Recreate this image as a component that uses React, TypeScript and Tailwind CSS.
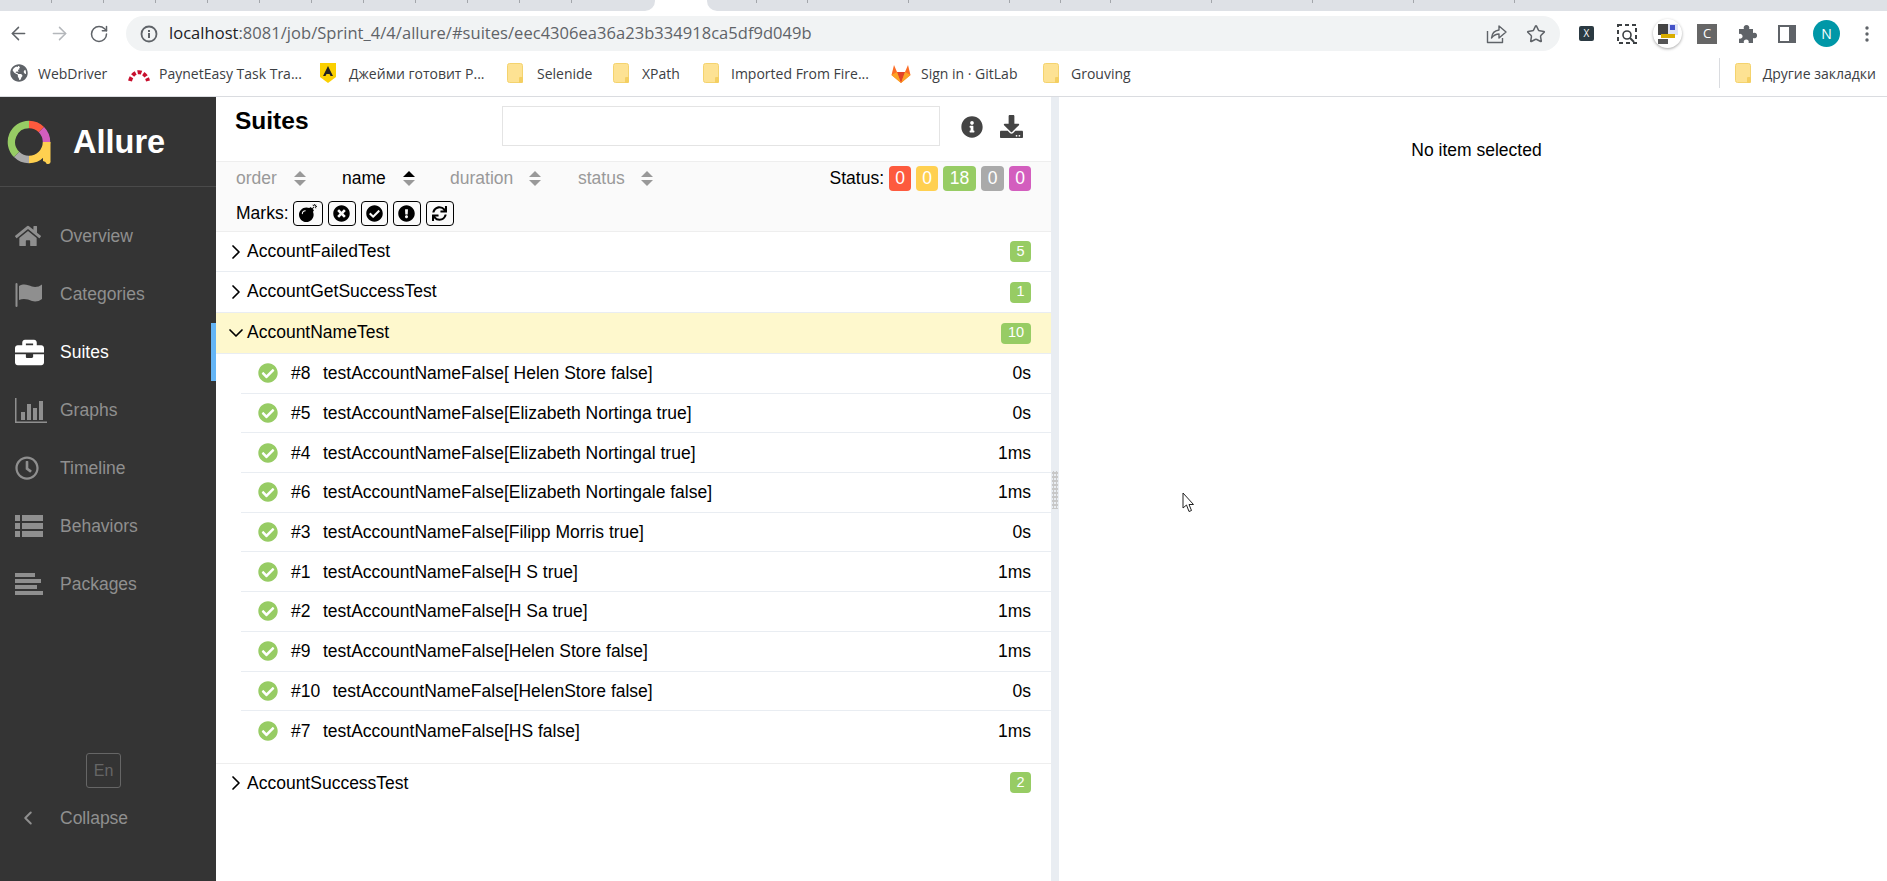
import React from "react";
import { ArrowLeft, ArrowRight, RotateCw, Star, ChevronRight, ChevronDown, ChevronLeft } from "lucide-react";
import { FaHome, FaBriefcase, FaRegClock, FaBomb, FaTimesCircle, FaCheckCircle, FaExclamationCircle, FaSync, FaInfoCircle, FaDownload, FaGlobeAmericas } from "react-icons/fa";

const Folder = () => (
  <svg width="16" height="20" viewBox="0 0 16 20" className="shrink-0">
    <rect x="0.5" y="0.5" width="15" height="19" rx="2" fill="#fde293" stroke="#f4d36e" />
    <rect x="12" y="14" width="4" height="6" rx="1" fill="#f4cf62" />
  </svg>
);

const Logo = () => (
  <svg width="44" height="44" viewBox="0 0 44 44" className="shrink-0">
    <g fill="none" strokeWidth="7.5">
      <path d="M22 4.5 A17.5 17.5 0 0 1 34.4 9.6" stroke="#fd5a3e" />
      <path d="M34.4 9.6 A17.5 17.5 0 0 1 39.5 22" stroke="#d35ebe" />
      <path d="M39.5 22 A17.5 17.5 0 0 1 22 39.5" stroke="#ffd050" />
      <path d="M22 39.5 A17.5 17.5 0 0 1 9.6 34.4" stroke="#aaaaaa" />
      <path d="M9.6 34.4 A17.5 17.5 0 0 1 22 4.5" stroke="#97cc64" />
    </g>
    <path d="M36 22 h7.5 v19 a2.5 2.5 0 0 1 -5 1 l-2.500 -1 z" fill="#ffd050" />
  </svg>
);

const Flag = () => (
  <svg width="28" height="25" viewBox="0 0 28 25" fill="#8f8f8f">
    <rect x="0.500" y="1" width="2" height="24" rx="1" />
    <path d="M4 4 C9 1 13 3 17 4.500 C20 5.500 24 5 27 2.500 V17 C24 19.500 20 20 17 19 C13 17.500 9 16 4 18 Z" />
  </svg>
);
const Chart = () => (
  <svg width="33" height="25" viewBox="0 0 33 25" fill="#8f8f8f">
    <rect x="0" y="0" width="1.500" height="25" />
    <rect x="0" y="23.500" width="32" height="1.500" />
    <rect x="6" y="14" width="4" height="8" />
    <rect x="12" y="6" width="4" height="16" />
    <rect x="18" y="10" width="4" height="12" />
    <rect x="24" y="3" width="4" height="19" />
  </svg>
);
const ListI = () => (
  <svg width="28" height="22" viewBox="0 0 28 22" fill="#8f8f8f">
    {[0, 8, 16].map((y) => (
      <g key={y}>
        <rect x="0" y={y} width="5" height="6" />
        <rect x="7" y={y} width="21" height="6" />
      </g>
    ))}
  </svg>
);
const Pack = () => (
  <svg width="28" height="22" viewBox="0 0 28 22" fill="#8f8f8f">
    <rect x="0" y="0" width="20" height="4" />
    <rect x="0" y="6" width="26" height="4" />
    <rect x="0" y="12" width="22" height="4" />
    <rect x="0" y="18" width="28" height="4" />
  </svg>
);

const Sort = ({ active }: { active?: boolean }) => (
  <svg width="12" height="15" viewBox="0 0 12 15" className="shrink-0">
    <path d="M6 0 L12 6 H0 Z" fill={active ? "#000000" : "#999999"} />
    <path d="M6 15 L12 9 H0 Z" fill="#999999" />
  </svg>
);

const Chev = () => <ChevronRight size={24} strokeWidth={1.700} className="-ml-[4px] -mr-[1px] shrink-0" />;

const nav = [
  { label: "Overview", icon: <FaHome size={26} color="#8f8f8f" /> },
  { label: "Categories", icon: <Flag /> },
  { label: "Suites", icon: <FaBriefcase size={29} color="#ffffff" />, active: true },
  { label: "Graphs", icon: <Chart /> },
  { label: "Timeline", icon: <FaRegClock size={24} color="#8f8f8f" /> },
  { label: "Behaviors", icon: <ListI /> },
  { label: "Packages", icon: <Pack /> },
];

const tests = [
  ["#8", "testAccountNameFalse[ Helen Store false]", "0s"],
  ["#5", "testAccountNameFalse[Elizabeth Nortinga true]", "0s"],
  ["#4", "testAccountNameFalse[Elizabeth Nortingal true]", "1ms"],
  ["#6", "testAccountNameFalse[Elizabeth Nortingale false]", "1ms"],
  ["#3", "testAccountNameFalse[Filipp Morris true]", "0s"],
  ["#1", "testAccountNameFalse[H S true]", "1ms"],
  ["#2", "testAccountNameFalse[H Sa true]", "1ms"],
  ["#9", "testAccountNameFalse[Helen Store false]", "1ms"],
  ["#10", "testAccountNameFalse[HelenStore false]", "0s"],
  ["#7", "testAccountNameFalse[HS false]", "1ms"],
];

const bookmarks: { w: string; gap: string; label: string; icon: React.ReactNode }[] = [
  { w: "w-[118px]", gap: "w-[28px]", label: "WebDriver", icon: <FaGlobeAmericas size={18} color="#5f6368" /> },
  {
    w: "w-[191px]",
    gap: "w-[31px]",
    label: "PaynetEasy Task Tra...",
    icon: (
      <svg width="22" height="18" viewBox="0 0 22 18">
        <path d="M2 17 A9.500 13 0 0 1 20 17" fill="none" stroke="#c8102e" strokeWidth="4" strokeDasharray="4 2" />
      </svg>
    ),
  },
  {
    w: "w-[188px]",
    gap: "w-[30px]",
    label: "Джейми готовит Р...",
    icon: (
      <svg width="18" height="22" viewBox="0 0 18 22">
        <path d="M1 1 H17 V15 L9 21 L1 15 Z" fill="#fbd000" />
        <path d="M9 4 L14 14 H11.500 L10.500 12 H7.500 L6.500 14 H4 Z" fill="#222222" />
      </svg>
    ),
  },
  { w: "w-[106px]", gap: "w-[30px]", label: "Selenide", icon: <Folder /> },
  { w: "w-[90px]", gap: "w-[29px]", label: "XPath", icon: <Folder /> },
  { w: "w-[188px]", gap: "w-[28px]", label: "Imported From Fire...", icon: <Folder /> },
  {
    w: "w-[152px]",
    gap: "w-[30px]",
    label: "Sign in · GitLab",
    icon: (
      <svg width="20" height="19" viewBox="0 0 20 19">
        <path d="M10 19 L0.500 11 L3 1 L6 8 H14 L17 1 L19.500 11 Z" fill="#fc6d26" />
        <path d="M10 19 L6 8 H14 Z" fill="#e24329" />
        <path d="M10 19 L0.500 11 L6 8 Z M10 19 L19.500 11 L14 8 Z" fill="#fca326" />
      </svg>
    ),
  },
  { w: "w-[150px]", gap: "w-[28px]", label: "Grouving", icon: <Folder /> },
];

const Group = ({ name, count, h = "h-[40px]", lift = "" }: { name: string; count: string; h?: string; lift?: string }) => (
  <div className={`${h} shrink-0 flex items-center border-b border-[#e9edf2] pl-[12px] pr-[20px]`}>
    <Chev />
    <span className={lift}>{name}</span>
    <span className="ml-auto rounded-[4px] bg-[#97cc64] min-w-[21px] h-[21px] px-[6px] flex items-center justify-center text-[14.500px] text-white">
      {count}
    </span>
  </div>
);

const markButtons = [
  { w: "w-[30px]", icon: <FaBomb size={18} /> },
  { w: "w-[28px]", icon: <FaTimesCircle size={17} /> },
  { w: "w-[27px]", icon: <FaCheckCircle size={17} /> },
  { w: "w-[28px]", icon: <FaExclamationCircle size={17} /> },
  { w: "w-[28px]", icon: <FaSync size={15} /> },
];

const statuses = [
  ["0", "w-[22px] bg-[#fd5a3e]"],
  ["0", "w-[22px] bg-[#ffd050]"],
  ["18", "w-[33px] bg-[#97cc64]"],
  ["0", "w-[23px] bg-[#aaaaaa]"],
  ["0", "w-[22px] bg-[#d35ebe]"],
];

export default function App() {
  return (
    <div className="h-[881px] w-[1887px] overflow-hidden flex flex-col bg-white font-['Liberation_Sans',Arial,sans-serif] text-[17.500px] text-black">
      {/* tab strip */}
      <div className="h-[11px] flex shrink-0">
        <div className="w-[655px] bg-[#dee1e6] rounded-br-[10px]">
          <div className="h-[3px] w-[620px] bg-[repeating-linear-gradient(90deg,transparent_0_51px,#a3a6ab_51px_52px)]" />
        </div>
        <div className="w-[52px]" />
        <div className="flex-1 bg-[#dee1e6] rounded-bl-[10px]">
          <div className="h-[3px] w-[851px] bg-[repeating-linear-gradient(90deg,transparent_0_49.500px,#a3a6ab_49.500px_50.500px)]" />
        </div>
      </div>

      {/* toolbar */}
      <div className="h-[45px] shrink-0 flex pt-[5px] font-['Open_Sans',sans-serif]">
        <div className="w-[126px] h-[35px] flex items-center pl-[8px]">
          <ArrowLeft size={21} color="#5f6368" strokeWidth={1.7} />
          <ArrowRight size={21} color="#b4b7bb" strokeWidth={1.7} className="ml-[20px]" />
          <RotateCw size={20} color="#5f6368" strokeWidth={1.800} className="ml-[19px]" />
        </div>
        <div className="w-[1434px] h-[35px] rounded-full bg-[#f1f3f4] flex items-center pl-[14px] pr-[14px]">
          <svg width="18" height="18" viewBox="0 0 18 18" className="shrink-0">
            <circle cx="9" cy="9" r="7.500" fill="none" stroke="#5f6368" strokeWidth="1.800" />
            <rect x="8" y="8" width="2" height="5" fill="#5f6368" />
            <rect x="8" y="5" width="2" height="2" fill="#5f6368" />
          </svg>
          <span className="ml-[11px] text-[16.500px] tracking-[0.04px] whitespace-nowrap">
            <span className="text-[#202124]">localhost</span>
            <span className="text-[#5f6368]">:8081/job/Sprint_4/4/allure/#suites/eec4306ea36a23b334918ca5df9d049b</span>
          </span>
          <svg width="21" height="21" viewBox="0 0 21 21" className="ml-auto shrink-0" fill="none" stroke="#5f6368" strokeWidth="1.400" strokeLinejoin="round">
            <path d="M1.500 8 V19.500 H16.500 V15" />
            <path d="M5.500 15 C6 10 9 7.500 13 7 V3 L20 9 L13 15 V11 C10 11 7.500 12.500 5.500 15 Z" />
          </svg>
          <Star size={20} color="#5f6368" strokeWidth={1.800} className="ml-[19px]" />
        </div>
        <div className="flex-1 h-[35px] flex items-center pl-[19px]">
          <span className="w-[15px] h-[15px] rounded-[2px] bg-[#2b3a42] text-white text-[10px] flex items-center justify-center shrink-0">X</span>
          <svg width="20" height="20" viewBox="0 0 20 20" className="ml-[23px] shrink-0">
            <rect x="1" y="1" width="18" height="18" fill="none" stroke="#3c4043" strokeWidth="2" strokeDasharray="4 3" />
            <circle cx="10" cy="11" r="4" fill="#ffffff" stroke="#3c4043" strokeWidth="1.600" />
            <path d="M13 14 L17 18" stroke="#3c4043" strokeWidth="2" />
          </svg>
          <span className="ml-[16px] w-[29px] h-[29px] rounded-full bg-white shadow-[0_1px_3px_rgba(0,0,0,0.35)] flex items-center justify-center shrink-0">
            <svg width="20" height="20" viewBox="0 0 20 20">
              <rect x="0" y="0" width="10" height="11" fill="#444444" />
              <rect x="10" y="0" width="10" height="11" fill="#dfe3f5" />
              <rect x="12" y="1" width="5" height="5" fill="#4452c8" />
              <rect x="3" y="10" width="14" height="4" fill="#d9ad00" />
              <rect x="0" y="15" width="10" height="5" fill="#555555" />
            </svg>
          </span>
          <span className="ml-[15px] w-[20px] h-[20px] bg-[#666666] text-white text-[13px] flex items-center justify-center shrink-0">C</span>
          <svg width="19" height="19" viewBox="0 0 19 19" fill="#5f6368" className="ml-[21px] shrink-0">
            <path d="M1 5 H6 a2.800 2.800 0 1 1 5 0 H15 V9 a2.800 2.800 0 1 1 0 5 V19 H10.500 a2.500 2.500 0 1 0 -4.500 0 H1 V14.500 a2.500 2.500 0 1 0 0 -4.500 Z" />
          </svg>
          <svg width="18" height="18" viewBox="0 0 18 18" className="ml-[21px] shrink-0">
            <path fillRule="evenodd" d="M0 0 H18 V18 H0 Z M2 2 V16 H11 V2 Z" fill="#5f6368" />
          </svg>
          <span className="ml-[17px] w-[27px] h-[27px] rounded-full bg-[#0097a7] text-white text-[14px] flex items-center justify-center shrink-0">N</span>
          <svg width="4" height="16" viewBox="0 0 4 16" className="ml-[25px] shrink-0">
            <circle cx="2" cy="2" r="1.700" fill="#5f6368" />
            <circle cx="2" cy="8" r="1.700" fill="#5f6368" />
            <circle cx="2" cy="14" r="1.700" fill="#5f6368" />
          </svg>
        </div>
      </div>

      {/* bookmarks */}
      <div className="h-[41px] shrink-0 border-b border-[#dadce0] flex pb-[6px] pl-[10px] items-center font-['Open_Sans',sans-serif] text-[14px] text-[#3c4043] whitespace-nowrap">
        {bookmarks.map((b) => (
          <div key={b.label} className={`${b.w} flex items-center shrink-0`}>
            <span className={`${b.gap} shrink-0 flex items-center`}>{b.icon}</span>
            <span>{b.label}</span>
          </div>
        ))}
        <div className="ml-auto flex items-center h-[30px] border-l border-[#dadce0] pl-[15px] pr-[11px]">
          <span className="w-[28px] shrink-0 flex items-center">
            <Folder />
          </span>
          <span>Другие закладки</span>
        </div>
      </div>

      {/* app */}
      <div className="flex-1 flex min-h-0">
        <aside className="w-[216px] shrink-0 bg-[#343434] flex flex-col">
          <div className="h-[90px] border-b border-[#4a4a4a] flex items-center pl-[7px] shrink-0">
            <Logo />
            <span className="ml-[22px] pt-[2px] text-[32.500px] font-bold text-white leading-none">Allure</span>
          </div>
          <nav className="mt-[20px]">
            {nav.map((n) => (
              <div
                key={n.label}
                className={`h-[58px] flex items-center ${n.active ? "border-r-[5px] border-[#64b5f6] text-white" : "text-[#8f8f8f]"}`}
              >
                <span className="w-[60px] pl-[15px] shrink-0 flex items-center">{n.icon}</span>
                <span>{n.label}</span>
              </div>
            ))}
          </nav>
          <div className="mt-auto flex flex-col pb-[43px]">
            <span className="ml-[86px] w-[35px] h-[35px] rounded-[3px] border border-[#666666] text-[#666666] flex items-center justify-center text-[16px]">
              En
            </span>
            <div className="mt-[10px] h-[40px] flex items-center text-[#8f8f8f]">
              <span className="w-[60px] pl-[17px] shrink-0">
                <ChevronLeft size={22} strokeWidth={2.200} />
              </span>
              <span>Collapse</span>
            </div>
          </div>
        </aside>

        <main className="w-[835px] shrink-0 flex flex-col">
          <div className="h-[64px] shrink-0 flex pl-[19px]">
            <h2 className="text-[24.500px] font-bold leading-none pt-[12px] w-[267px]">Suites</h2>
            <div className="mt-[9px] w-[438px] h-[40px] border border-[#e4e4e4]" />
            <FaInfoCircle size={22} color="#444444" className="ml-[21px] mt-[19px]" />
            <FaDownload size={23} color="#444444" className="ml-[17px] mt-[18px]" />
          </div>
          <div className="h-[71px] shrink-0 border-y border-[#eeeeee] bg-[#fafafa] pl-[20px] pr-[20px] text-[#999999]">
            <div className="h-[32px] flex items-center">
              <span className="w-[58px]">order</span>
              <Sort />
              <span className="ml-[36px] w-[61px] text-black">name</span>
              <Sort active />
              <span className="ml-[35px] w-[79px]">duration</span>
              <Sort />
              <span className="ml-[37px] w-[63px]">status</span>
              <Sort />
              <span className="ml-auto text-black">Status:</span>
              <div className="ml-[5px] flex gap-[5px]">
                {statuses.map(([t, c], i) => (
                  <span key={i} className={`${c} h-[25px] rounded-[4px] text-white flex items-center justify-center`}>
                    {t}
                  </span>
                ))}
              </div>
            </div>
            <div className="mt-[4px] h-[30px] flex items-center text-black">
              <span>Marks:</span>
              <div className="ml-[4px] flex gap-[5px]">
                {markButtons.map((m, i) => (
                  <span key={i} className={`${m.w} h-[25px] rounded-[4px] border border-black flex items-center justify-center bg-[#fafafa]`}>
                    {m.icon}
                  </span>
                ))}
              </div>
            </div>
          </div>

          <Group name="AccountFailedTest" count="5" />
          <Group name="AccountGetSuccessTest" count="1" h="h-[41px]" lift="pb-[2px]" />

          <div className="h-[41px] shrink-0 flex items-center bg-[#fef8cd] border-b border-[#e9edf2] pl-[12px] pr-[20px]">
            <ChevronDown size={24} strokeWidth={1.700} className="-ml-[4px] -mr-[1px] shrink-0" />
            <span className="pb-[2px]">AccountNameTest</span>
            <span className="ml-auto rounded-[4px] bg-[#97cc64] h-[21px] w-[30px] flex items-center justify-center text-[14.500px] text-white">10</span>
          </div>

          <div className="ml-[25px] pb-[12px]">
            {tests.map(([n, t, d], i) => (
              <div key={n} className={`h-[39.700px] flex items-center pr-[20px] ${i < tests.length - 1 ? "border-b border-[#e9edf2]" : ""}`}>
                <FaCheckCircle size={20} color="#97cc64" className="ml-[17px] shrink-0" />
                <span className="ml-[13px] mr-[12.500px]">{n}</span>
                <span>{t}</span>
                <span className="ml-auto">{d}</span>
              </div>
            ))}
          </div>
          <div className="flex items-center h-[39px] border-t border-[#eeeeee] pl-[12px] pr-[20px]">
            <Chev />
            <span>AccountSuccessTest</span>
            <span className="ml-auto rounded-[4px] bg-[#97cc64] w-[21px] h-[21px] flex items-center justify-center text-[14.500px] text-white">2</span>
          </div>
        </main>

        <div className="w-[8px] shrink-0 bg-[#e9edf2] flex items-center justify-center">
          <div className="w-[6px] h-[38px] mb-[-1px] bg-[radial-gradient(circle,#c8c8c8_1.500px,transparent_1.600px)] bg-[length:3px_4px]" />
        </div>

        <section className="relative flex-1 flex justify-center pt-[43px] pl-[7px]">
          <span className="leading-5">No item selected</span>
          <svg width="13" height="21" viewBox="0 0 13 21" className="absolute left-[123px] top-[395px]">
            <path d="M1 1 V16 L4.500 13 L7 19.500 L9.500 18.500 L7 12.500 H11.500 Z" fill="#ffffff" stroke="#222222" strokeWidth="1" />
          </svg>
        </section>
      </div>
    </div>
  );
}
